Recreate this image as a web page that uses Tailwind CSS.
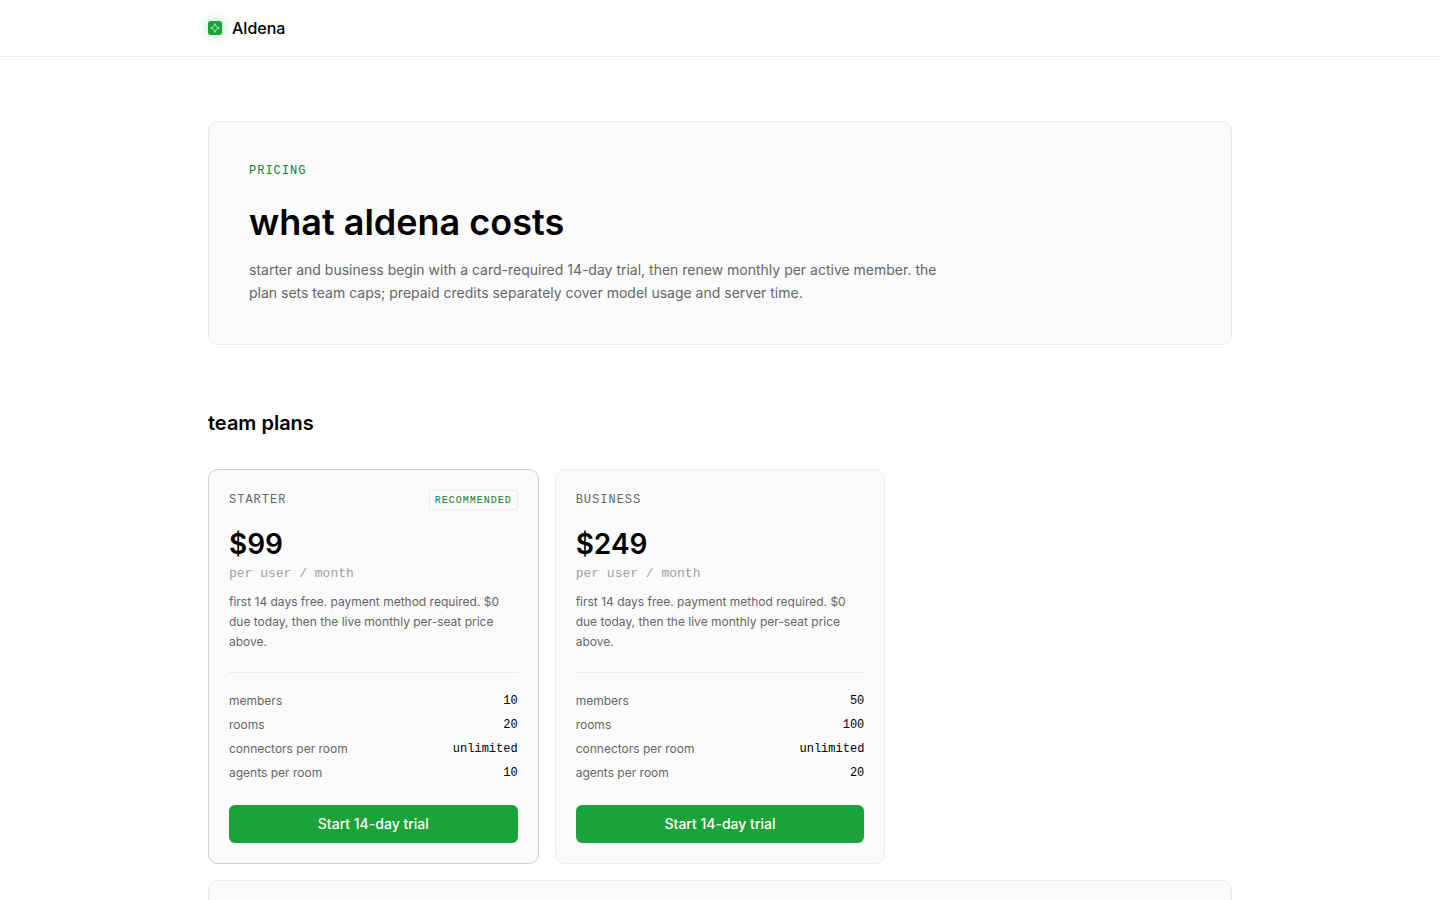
<!DOCTYPE html>
<html lang="en">
<head>
<meta charset="utf-8">
<meta name="viewport" content="width=device-width, initial-scale=1">
<title>Aldena – Pricing</title>
<script src="https://cdn.jsdelivr.net/npm/@tailwindcss/browser@4"></script>
</head>
<body class="min-h-screen bg-white font-['Inter',sans-serif] text-black">
<header class="border-b border-[#ebebeb]">
  <div class="mx-auto flex h-14 max-w-5xl items-center">
    <a href="#" class="flex items-center gap-2.5 text-base font-medium">
      <span class="flex size-3.5 items-center justify-center rounded-[3px] bg-[#1aa338] shadow-[0_0_12px_rgba(26,163,56,0.35)]">
        <svg class="size-3.5" viewBox="0 0 14 14" fill="none" stroke="#c9f2d0" stroke-width="0.8" stroke-linejoin="round" aria-hidden="true"><path d="M7 2.6 8.3 5.7 11.4 7 8.3 8.3 7 11.4 5.7 8.3 2.6 7 5.7 5.7Z"/></svg>
      </span>
      Aldena
    </a>
  </div>
</header>
<main class="mx-auto max-w-5xl pt-16">
  <section class="rounded-[10px] border border-[#ebebeb] bg-[#fbfbfb] p-10">
    <p class="font-['Liberation_Mono',monospace] text-xs leading-[18px] tracking-[1px] text-[#197a32]">PRICING</p>
    <h1 class="mt-[22px] text-4xl font-semibold">what aldena costs</h1>
    <p class="mt-4 max-w-[700px] text-sm leading-[23px] text-[#666666]">starter and business begin with a card-required 14-day trial, then renew monthly per active member. the plan sets team caps; prepaid credits separately cover model usage and server time.</p>
  </section>
  <section class="mt-16">
    <h2 class="text-xl font-semibold">team plans</h2>
    <div class="mt-8 grid grid-cols-3 gap-4">
      <article class="rounded-[10px] border border-[#cfcfcf] bg-[#fbfbfb] p-5">
        <div class="flex h-5 items-center justify-between font-['Liberation_Mono',monospace]">
          <h3 class="text-xs leading-5 tracking-[1px] text-[#666666]">STARTER</h3>
          <span class="flex h-5 items-center rounded-[3px] border border-[#ebebeb] px-[5px] text-[10px] tracking-[1px] text-[#197a32]">RECOMMENDED</span>
        </div>
        <p class="mt-4 text-[28px] leading-9 font-semibold">$99</p>
        <p class="font-['Liberation_Mono',monospace] text-[13px] leading-6 text-[#a1a1a1]">per user / month</p>
        <p class="mt-1.5 text-xs leading-5 text-[#666666]">first 14 days free. payment method required. $0 due today, then the live monthly per-seat price above.</p>
        <dl class="mt-5 flex flex-col gap-2 border-t border-[#ebebeb] pt-5 text-xs">
          <div class="flex justify-between"><dt class="text-[#666666]">members</dt><dd class="font-['Liberation_Mono',monospace]">10</dd></div>
          <div class="flex justify-between"><dt class="text-[#666666]">rooms</dt><dd class="font-['Liberation_Mono',monospace]">20</dd></div>
          <div class="flex justify-between"><dt class="text-[#666666]">connectors per room</dt><dd class="font-['Liberation_Mono',monospace]">unlimited</dd></div>
          <div class="flex justify-between"><dt class="text-[#666666]">agents per room</dt><dd class="font-['Liberation_Mono',monospace]">10</dd></div>
        </dl>
        <button type="button" class="mt-6 h-[38px] w-full rounded-md bg-[#1aa338] text-sm font-medium text-white">Start 14-day trial</button>
      </article>
      <article class="rounded-[10px] border border-[#ebebeb] bg-[#fbfbfb] p-5">
        <div class="flex h-5 items-center font-['Liberation_Mono',monospace]">
          <h3 class="text-xs leading-5 tracking-[1px] text-[#666666]">BUSINESS</h3>
        </div>
        <p class="mt-4 text-[28px] leading-9 font-semibold">$249</p>
        <p class="font-['Liberation_Mono',monospace] text-[13px] leading-6 text-[#a1a1a1]">per user / month</p>
        <p class="mt-1.5 text-xs leading-5 text-[#666666]">first 14 days free. payment method required. $0 due today, then the live monthly per-seat price above.</p>
        <dl class="mt-5 flex flex-col gap-2 border-t border-[#ebebeb] pt-5 text-xs">
          <div class="flex justify-between"><dt class="text-[#666666]">members</dt><dd class="font-['Liberation_Mono',monospace]">50</dd></div>
          <div class="flex justify-between"><dt class="text-[#666666]">rooms</dt><dd class="font-['Liberation_Mono',monospace]">100</dd></div>
          <div class="flex justify-between"><dt class="text-[#666666]">connectors per room</dt><dd class="font-['Liberation_Mono',monospace]">unlimited</dd></div>
          <div class="flex justify-between"><dt class="text-[#666666]">agents per room</dt><dd class="font-['Liberation_Mono',monospace]">20</dd></div>
        </dl>
        <button type="button" class="mt-6 h-[38px] w-full rounded-md bg-[#1aa338] text-sm font-medium text-white">Start 14-day trial</button>
      </article>
    </div>
    <div class="mt-4 rounded-[10px] border border-[#ebebeb] bg-[#fbfbfb] p-10"></div>
  </section>
</main>
</body>
</html>
